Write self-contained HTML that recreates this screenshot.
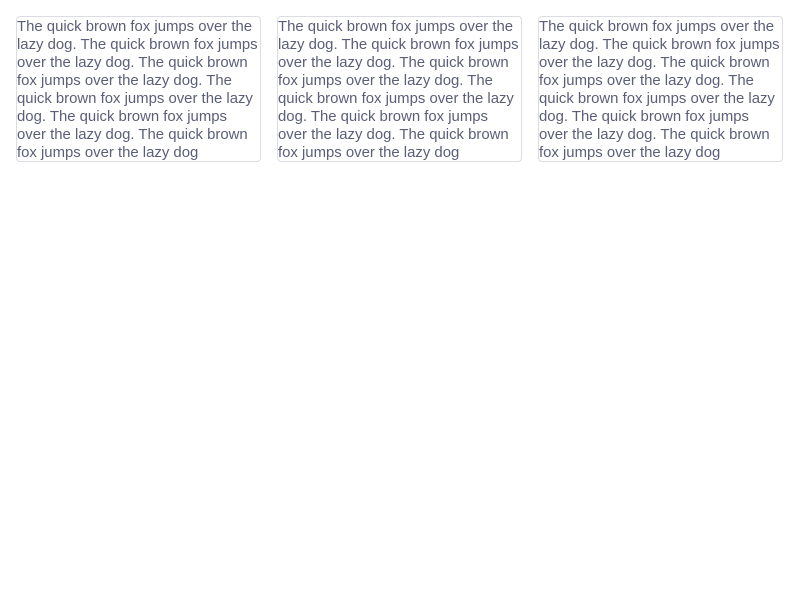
<!DOCTYPE html>
<html><head><style>
body{margin:0;background:#fff;}
.wrap{display:flex;gap:16px;padding:16px;}
.box{width:243px;border:1px solid #dcdce4;border-radius:4px;font-family:"Liberation Sans",sans-serif;font-size:14.9px;line-height:18px;color:#5b5e78;overflow:hidden;white-space:nowrap;padding-top:1px;box-sizing:content-box;height:143px;}
</style></head><body>
<div class="wrap">
<div class="box">The quick brown fox jumps over the<br>lazy dog. The quick brown fox jumps<br>over the lazy dog. The quick brown<br>fox jumps over the lazy dog. The<br>quick brown fox jumps over the lazy<br>dog. The quick brown fox jumps<br>over the lazy dog. The quick brown<br>fox jumps over the lazy dog</div>
<div class="box">The quick brown fox jumps over the<br>lazy dog. The quick brown fox jumps<br>over the lazy dog. The quick brown<br>fox jumps over the lazy dog. The<br>quick brown fox jumps over the lazy<br>dog. The quick brown fox jumps<br>over the lazy dog. The quick brown<br>fox jumps over the lazy dog</div>
<div class="box">The quick brown fox jumps over the<br>lazy dog. The quick brown fox jumps<br>over the lazy dog. The quick brown<br>fox jumps over the lazy dog. The<br>quick brown fox jumps over the lazy<br>dog. The quick brown fox jumps<br>over the lazy dog. The quick brown<br>fox jumps over the lazy dog</div>
</div>
</body></html>
